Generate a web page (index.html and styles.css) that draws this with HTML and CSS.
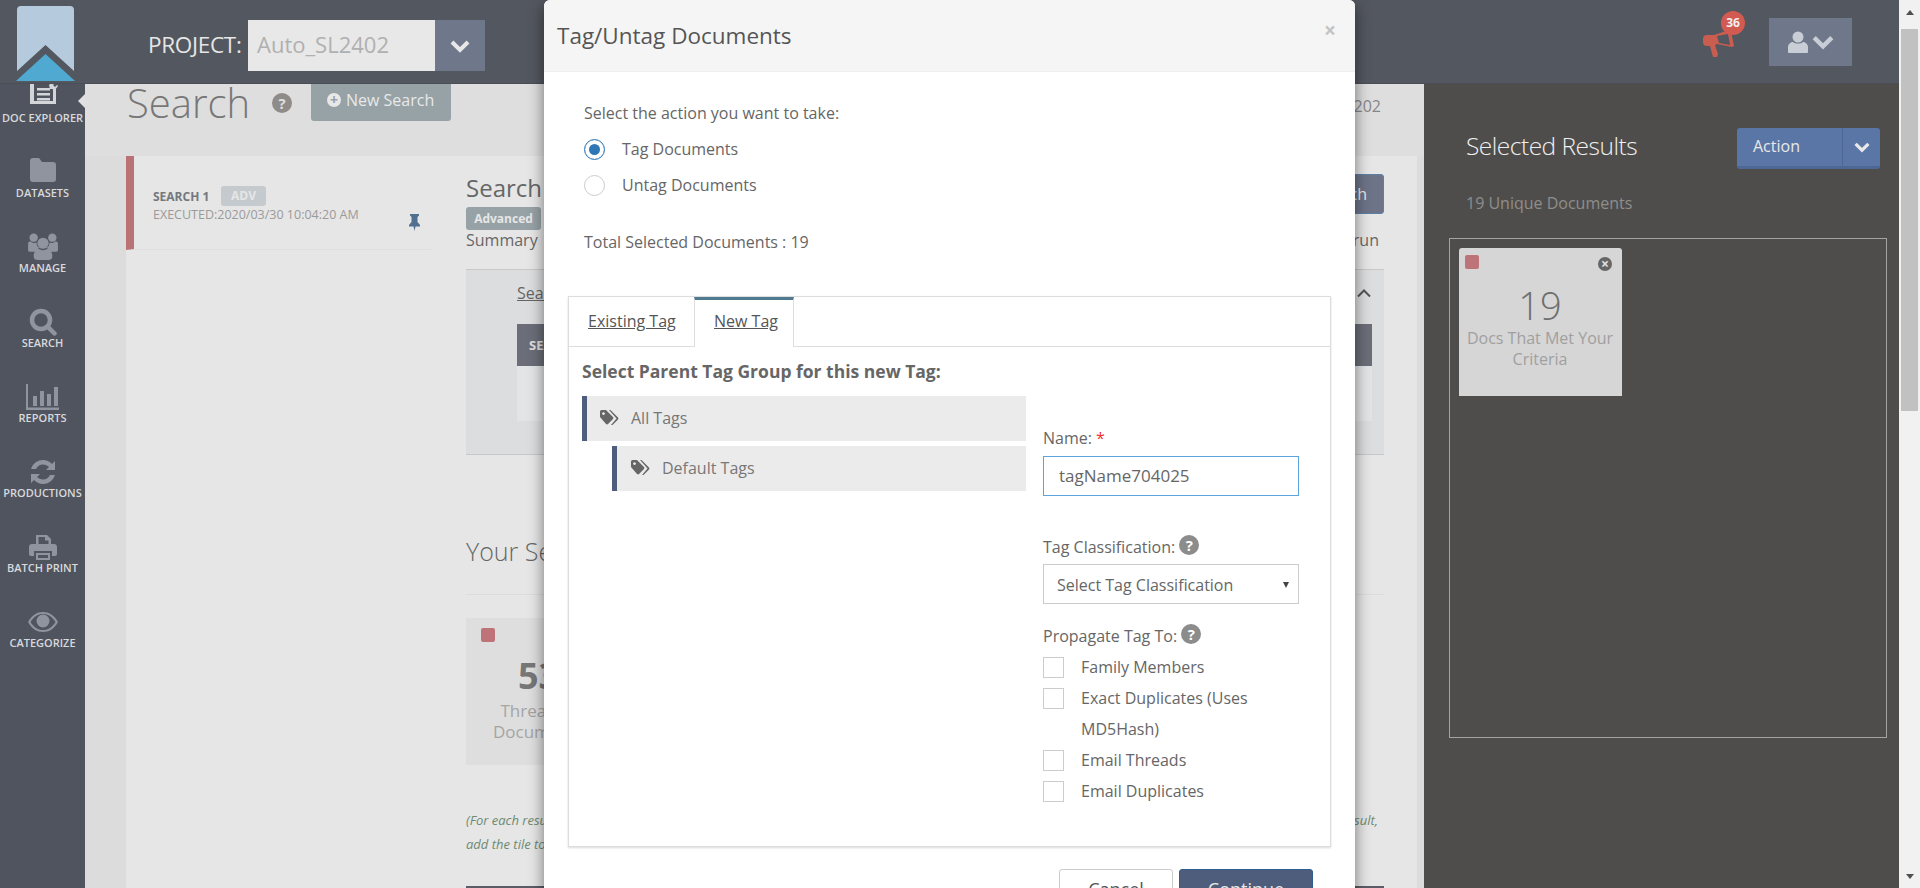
FILE: index.html
```html
<!DOCTYPE html>
<html lang="en">
<head>
  <meta charset="UTF-8">
  <title>Search</title>
  <link rel="stylesheet" href="styles.css">
</head>
<body>
  <div class="page">
    <div class="app">
      <!-- Top bar -->
      <header class="topbar">
        <svg class="logo" width="64" height="78" viewBox="0 0 64 78">
          <path d="M6 6a4 4 0 0 1 4-4h49a4 4 0 0 1 4 4v61L34.500 41 6 67z" fill="#b5cbdd"/>
          <path d="M34.500 50 64 77H5z" fill="#4fa9d1"/>
        </svg>
        <span class="project-label">PROJECT:</span>
        <div class="project-select">
          <span class="project-name">Auto_SL2402</span>
          <span class="project-btn">
            <svg width="20" height="14" viewBox="0 0 20 14"><path d="M2 3l8 8 8-8" class="chev-line"/></svg>
          </span>
        </div>
        <div class="top-right">
          <div class="notify">
            <svg width="32" height="27" viewBox="0 0 32 27">
              <path d="M0 9a4 4 0 0 1 4-4h7L26 0l2 1 3 15-2 1-15-3-2 1 3 9-1 3h-4l-3-11H4a4 4 0 0 1-4-4zM14 6l2 7 11 2-2-11z" fill="#c95d50" fill-rule="evenodd"/>
            </svg>
            <span class="notify-badge">36</span>
          </div>
          <div class="user-btn">
            <svg width="20" height="22" viewBox="0 0 20 22">
              <circle cx="10" cy="6" r="5.500" fill="#c9ced6"/>
              <path d="M1 22a1 1 0 0 1-1-1v-5c0-3 3-5 5-5 2 2 8 2 10 0 2 0 5 2 5 5v5a1 1 0 0 1-1 1z" fill="#c9ced6"/>
            </svg>
            <svg width="22" height="16" viewBox="0 0 20 14"><path d="M2 3l8 8 8-8" class="chev-line user-chev"/></svg>
          </div>
        </div>
      </header>

      <div class="body-row">
        <!-- Left nav -->
        <nav class="sidenav">
          <div class="nav-list">
            <a class="nav-item">
              <svg class="nav-icon" width="30" height="28" viewBox="0 0 30 28">
                <path d="M2 -3h20v4h-16v17h19V6h3v15H2z" fill="#d4d5d8"/>
                <path d="M9 5h13v2.500H9zM9 10h13v2.500H9zM9 15h13v2.500H9z" fill="#d4d5d8"/>
                <path d="M21 2l3-3 2 2-1 1 2 2 2-2 1 1-3 4-3-1-2 0z" fill="#d4d5d8"/>
              </svg>
              <span class="nav-label">DOC EXPLORER</span>
            </a>
            <a class="nav-item">
              <svg class="nav-icon" width="28" height="28" viewBox="0 3 28 28">
                <path d="M1 6a3 3 0 0 1 3-3h6l3 4h11a3 3 0 0 1 3 3v14a3 3 0 0 1-3 3H4a3 3 0 0 1-3-3z" fill="#90949f"/>
              </svg>
              <span class="nav-label">DATASETS</span>
            </a>
            <a class="nav-item">
              <svg class="nav-icon" width="32" height="30" viewBox="0 0 32 30">
                <circle cx="6" cy="5" r="4.500" fill="#90949f"/>
                <circle cx="26" cy="5" r="4.500" fill="#90949f"/>
                <circle cx="16" cy="11" r="6" fill="#90949f"/>
                <path d="M0 11c0-2 2-2 3-2 2 2 5 2 6 1 0 3 1 5 3 6-2 1-3 2-4 4H2c-2 0-2-1-2-2zM32 11c0-2-2-2-3-2-2 2-5 2-6 1 0 3-1 5-3 6 2 1 3 2 4 4h6c2 0 2-1 2-2z" fill="#90949f"/>
                <path d="M6 25c0-5 3-8 5-8 3 2 7 2 10 0 2 0 5 3 5 8 0 3-2 4-4 4H10c-2 0-4-1-4-4z" fill="#90949f"/>
              </svg>
              <span class="nav-label">MANAGE</span>
            </a>
            <a class="nav-item">
              <svg class="nav-icon" width="28" height="28" viewBox="0 0 28 28">
                <circle cx="12" cy="12" r="9" fill="none" stroke="#90949f" stroke-width="4.500"/>
                <path d="M18.500 18.500l7 7" stroke="#90949f" stroke-width="4.500" stroke-linecap="round"/>
              </svg>
              <span class="nav-label">SEARCH</span>
            </a>
            <a class="nav-item">
              <svg class="nav-icon" width="33" height="26" viewBox="0 0 33 26">
                <path d="M0 0h2v23.500h31V26H0z" fill="#90949f"/>
                <path d="M7 12h4v10H7zM14 7h4v15h-4zM21 10h4v12h-4zM28 3h4v19h-4z" fill="#90949f"/>
              </svg>
              <span class="nav-label">REPORTS</span>
            </a>
            <a class="nav-item">
              <svg class="nav-icon" width="26" height="26" viewBox="0 0 26 26">
                <path d="M1 10C3 4 8 1 13 1c4 0 7 2 9 4l3-3v9h-9l3-3c-1.500-1.500-4-2.500-6-2.500-3 0-6 2-7 4.500z" fill="#90949f"/>
                <path d="M25 16c-2 6-7 9-12 9-4 0-7-2-9-4l-3 3v-9h9l-3 3c1.500 1.500 4 2.500 6 2.500 3 0 6-2 7-4.500z" fill="#90949f"/>
              </svg>
              <span class="nav-label">PRODUCTIONS</span>
            </a>
            <a class="nav-item">
              <svg class="nav-icon" width="28" height="26" viewBox="0 0 28 26">
                <path d="M7 1h11l4 4v6h-2.500V6.500H16V3H9.500v8H7z" fill="#90949f"/>
                <path d="M3 10h22a3 3 0 0 1 3 3v7a2 2 0 0 1-2 2h-3v-5H5v5H2a2 2 0 0 1-2-2v-7a3 3 0 0 1 3-3z" fill="#90949f"/>
                <path d="M7 19h14v7H7z" fill="#90949f"/>
                <path d="M9 21h10v3H9z" fill="#50545e"/>
              </svg>
              <span class="nav-label">BATCH PRINT</span>
            </a>
            <a class="nav-item">
              <svg class="nav-icon" width="30" height="20" viewBox="0 0 30 20">
                <path d="M0 10C4 3 9 0 15 0s11 3 15 10c-4 7-9 10-15 10S4 17 0 10zm2.500 0C6 15.500 10 18 15 18s9-2.500 12.500-8C24 4.500 20 2 15 2S6 4.500 2.500 10z" fill="#90949f" fill-rule="evenodd"/>
                <circle cx="15" cy="9" r="6.500" fill="#90949f"/>
              </svg>
              <span class="nav-label">CATEGORIZE</span>
            </a>
          </div>
          <span class="nav-notch"></span>
        </nav>

        <!-- Main search page, mostly behind the dialog -->
        <main class="content">
          <div class="title-row">
            <h1 class="page-title">Search</h1>
            <span class="help-dot help-lg">?</span>
            <a class="new-search">
              <span class="plus-dot">+</span>
              New Search
            </a>
            <span class="title-meta">202</span>
          </div>

          <div class="panel">
            <div class="search-list">
              <div class="search-item">
                <div class="search-line">
                  <span class="search-name">SEARCH 1</span>
                  <span class="adv-badge">ADV</span>
                </div>
                <div class="search-date-row">
                  <span class="search-date">EXECUTED:2020/03/30 10:04:20 AM</span>
                  <svg class="pin" width="13" height="17" viewBox="0 0 13 17">
                    <path d="M2 0h9v1.500L9.500 3v5l2.500 3v1.500H7.500L6.500 17l-1-4.500H1V11l2.500-3V3L2 1.500z" fill="#4f708f"/>
                  </svg>
                </div>
              </div>
            </div>

            <div class="search-detail">
              <div class="detail-head">
                <h2 class="detail-title">Search</h2>
                <a class="detail-btn">Save Search</a>
              </div>
              <span class="advanced-badge">Advanced</span>
              <div class="summary-row">
                <span>Summary</span>
                <span>run</span>
              </div>
              <div class="summary-box">
                <div class="summary-top">
                  <a class="summary-link">Search</a>
                  <svg width="16" height="10" viewBox="0 0 16 10"><path d="M2 8.500l6-6 6 6" fill="none" stroke="#555" stroke-width="2"/></svg>
                </div>
                <div class="summary-table-head">SEARCH</div>
                <div class="summary-table-row"></div>
              </div>

              <h2 class="results-title">Your Search Results</h2>
              <div class="tile tile-main">
                <span class="tile-square"></span>
                <div class="tile-num">53</div>
                <div class="tile-text">Threaded<br>Documents</div>
              </div>
              <p class="hint hint-first">
                <span>(For each result, check the count on its tile</span>
                <span>result,</span>
              </p>
              <p class="hint">add the tile to the selected results</p>
              <div class="detail-rule"></div>
            </div>
          </div>
        </main>

        <!-- Selected results -->
        <aside class="selected">
          <div class="selected-head">
            <h2 class="selected-title">Selected Results</h2>
            <div class="action-btn">
              <span class="action-text">Action</span>
              <span class="action-caret">
                <svg width="16" height="12" viewBox="0 0 20 14"><path d="M2 3l8 8 8-8" class="chev-line"/></svg>
              </span>
            </div>
          </div>
          <div class="selected-count">19 Unique Documents</div>
          <div class="selected-box">
            <div class="tile-card">
              <div class="card-top">
                <span class="tile-square"></span>
                <span class="card-close">×</span>
              </div>
              <div class="card-num">19</div>
              <div class="card-text">Docs That Met Your Criteria</div>
            </div>
          </div>
        </aside>
      </div>
    </div>

    <!-- Fake page scrollbar -->
    <div class="scrollbar">
      <span class="arrow-up"></span>
      <span class="scroll-thumb"></span>
      <span class="arrow-down"></span>
    </div>

    <!-- Dialog -->
    <div class="modal">
      <div class="modal-header">
        <h3 class="modal-title">Tag/Untag Documents</h3>
        <span class="modal-close">×</span>
      </div>
      <div class="modal-body">
        <div class="action-block">
          <p class="action-prompt">Select the action you want to take:</p>
          <div class="radio-row"><span class="radio radio-on"></span>Tag Documents</div>
          <div class="radio-row"><span class="radio"></span>Untag Documents</div>
          <p class="total-line">Total Selected Documents : 19</p>
        </div>

        <div class="tab-box">
          <div class="tabs">
            <a class="tab">Existing Tag</a>
            <a class="tab tab-active">New Tag</a>
          </div>
          <div class="tab-panel">
            <p class="parent-title">Select Parent Tag Group for this new Tag:</p>
            <div class="tab-columns">
              <div class="tree">
                <div class="tree-row">
                  <svg class="tag-icon" width="19" height="15" viewBox="0 0 19 15">
                    <path d="M0 1.500A1.500 1.500 0 0 1 1.500 0H6l7 7a1.500 1.500 0 0 1 0 2l-5 5a1.500 1.500 0 0 1-2 0L0 7zM3.500 2.200a1.400 1.400 0 1 0 .01 0z" fill="#666" fill-rule="evenodd"/>
                    <path d="M9 0h1.500l7.500 7.500a1.500 1.500 0 0 1 0 2L12.500 15H11l5.500-6.500z" fill="#666"/>
                  </svg>
                  <span>All Tags</span>
                </div>
                <div class="tree-row tree-child">
                  <svg class="tag-icon" width="19" height="15" viewBox="0 0 19 15">
                    <path d="M0 1.500A1.500 1.500 0 0 1 1.500 0H6l7 7a1.500 1.500 0 0 1 0 2l-5 5a1.500 1.500 0 0 1-2 0L0 7zM3.500 2.200a1.400 1.400 0 1 0 .01 0z" fill="#666" fill-rule="evenodd"/>
                    <path d="M9 0h1.500l7.500 7.500a1.500 1.500 0 0 1 0 2L12.500 15H11l5.500-6.500z" fill="#666"/>
                  </svg>
                  <span>Default Tags</span>
                </div>
              </div>

              <div class="tag-form">
                <label class="form-label">Name: <span class="req">*</span></label>
                <div class="text-input">tagName704025</div>
                <label class="form-label label-class">Tag Classification: <span class="help-dot">?</span></label>
                <div class="select-input">
                  <span>Select Tag Classification</span>
                  <span class="select-arrow"></span>
                </div>
                <label class="form-label label-prop">Propagate Tag To: <span class="help-dot">?</span></label>
                <div class="checks">
                  <div class="check-row"><span class="checkbox"></span><span>Family Members</span></div>
                  <div class="check-row"><span class="checkbox"></span><span>Exact Duplicates (Uses MD5Hash)</span></div>
                  <div class="check-row"><span class="checkbox"></span><span>Email Threads</span></div>
                  <div class="check-row"><span class="checkbox"></span><span>Email Duplicates</span></div>
                </div>
              </div>
            </div>
          </div>
        </div>
      </div>
      <div class="modal-footer">
        <a class="btn btn-cancel">Cancel</a>
        <a class="btn btn-continue">Continue</a>
      </div>
    </div>
  </div>
</body>
</html>
```

FILE: styles.css
```css
* {
  box-sizing: border-box;
}
html, body {
  margin: 0;
  height: 100%;
  overflow: hidden;
}
body {
  font-family: "Open Sans", sans-serif;
  font-size: 16px;
  color: #666;
}
h1, h2, h3, p {
  margin: 0;
  font-weight: normal;
}
.page {
  position: relative;
  display: flex;
  width: 1920px;
  height: 888px;
  overflow: hidden;
}
.app {
  flex: 1;
  display: flex;
  flex-direction: column;
  min-width: 0;
}

/* top bar */
.topbar {
  position: relative;
  z-index: 2;
  flex: 0 0 84px;
  display: flex;
  align-items: flex-start;
  background-color: #53575f;
  border-bottom: 1px solid #4b4e56;
}
.logo {
  flex: none;
  margin: 4px 0 0 11px;
}
.project-label {
  margin: 28px 0 0 73px;
  width: 100px;
  font-size: 22.500px;
  line-height: 34px;
  letter-spacing: -0.3px;
  color: #e6e6e6;
}
.project-select {
  display: flex;
  margin-top: 20px;
  height: 51px;
}
.project-name {
  width: 187px;
  padding-left: 9px;
  font-size: 22px;
  line-height: 48px;
  color: #b0b0b0;
  background-color: #e8e8e8;
}
.project-btn {
  display: flex;
  align-items: center;
  justify-content: center;
  width: 50px;
  background-color: #6f778a;
}
.chev-line {
  fill: none;
  stroke: #e8e8e8;
  stroke-width: 4;
}
.user-chev {
  stroke: #c9ced6;
}
.top-right {
  margin-left: auto;
  display: flex;
  margin-right: 47px;
}
.notify {
  position: relative;
  margin: 30px 34px 0 0;
  width: 32px;
  height: 27px;
}
.notify-badge {
  position: absolute;
  left: 18px;
  top: -19px;
  width: 24px;
  height: 24px;
  border-radius: 50%;
  background-color: #d35a50;
  color: #f0f0f0;
  font-size: 12px;
  font-weight: 700;
  line-height: 24px;
  text-align: center;
}
.user-btn {
  display: flex;
  align-items: center;
  justify-content: center;
  gap: 4px;
  margin-top: 18px;
  width: 83px;
  height: 48px;
  background-color: #6f778a;
}

.body-row {
  flex: 1;
  display: flex;
  min-height: 0;
}

/* left nav */
.sidenav {
  position: relative;
  flex: 0 0 85px;
  background-color: #50545e;
}
.nav-list {
  margin-top: -14px;
}
.nav-item {
  display: block;
  height: 75px;
  padding-top: 13px;
  text-align: center;
}
.nav-icon {
  display: block;
  height: 28px;
  margin: 0 auto;
}
.nav-label {
  display: block;
  font-size: 11px;
  font-weight: 600;
  line-height: 14px;
  white-space: nowrap;
  color: #d8d9dc;
}
.nav-notch {
  position: absolute;
  right: 0;
  top: 10px;
  border-top: 7px solid transparent;
  border-bottom: 7px solid transparent;
  border-right: 7px solid #e0e0e0;
}

/* main content */
.content {
  flex: 0 0 1339px;
  min-width: 0;
  background-color: #dcdcdc;
}
.title-row {
  display: flex;
  align-items: flex-start;
  height: 72px;
  padding-left: 42px;
  background-color: #dedede;
}
.page-title {
  flex: 0 0 145px;
  font-size: 40px;
  font-weight: 300;
  line-height: 38px;
  color: #777;
}
.help-dot {
  display: inline-block;
  width: 20px;
  height: 20px;
  border-radius: 50%;
  background-color: #8c8c8c;
  color: #fff;
  font-size: 15px;
  font-weight: 700;
  line-height: 20px;
  text-align: center;
  vertical-align: 2px;
}
.help-lg {
  margin-top: 9px;
  background-color: #8e8b88;
  color: #e0e0e0;
}
.new-search {
  display: flex;
  align-items: center;
  gap: 5px;
  margin-left: 19px;
  width: 140px;
  height: 37px;
  padding: 0 0 6px 16px;
  background-color: #97a2a6;
  border-radius: 0 0 3px 3px;
  color: #e8e8e8;
  font-size: 16px;
}
.plus-dot {
  width: 14px;
  height: 14px;
  border-radius: 50%;
  background-color: #e8e8e8;
  color: #97a2a6;
  font-size: 14px;
  font-weight: 700;
  line-height: 14px;
  text-align: center;
}
.title-meta {
  margin: 11px 43px 0 auto;
  font-size: 16px;
  line-height: 22px;
  color: #888;
}
.panel {
  display: flex;
  margin-left: 41px;
  width: 1291px;
  height: 732px;
  background-color: #e6e6e6;
}
.search-list {
  flex: 0 0 305px;
}
.search-item {
  height: 94px;
  padding: 30px 0 0 19px;
  border-left: 8px solid #b97376;
  border-bottom: 1px solid #dedede;
}
.search-line {
  display: flex;
  align-items: center;
  height: 20px;
}
.search-name {
  width: 68px;
  font-size: 12px;
  font-weight: 700;
  color: #74787d;
}
.adv-badge {
  width: 45px;
  height: 20px;
  border-radius: 3px;
  background-color: #c4cace;
  color: #e6e6e6;
  font-size: 12px;
  font-weight: 700;
  line-height: 20px;
  text-align: center;
}
.search-date-row {
  display: flex;
  align-items: flex-start;
}
.search-date {
  width: 255px;
  font-size: 12.500px;
  line-height: 17px;
  white-space: nowrap;
  color: #9a9a9a;
}
.pin {
  margin-top: 8px;
}
.search-detail {
  width: 918px;
  margin-left: 35px;
}
.detail-head {
  display: flex;
  justify-content: space-between;
  align-items: flex-start;
  height: 51px;
  padding-top: 18px;
}
.detail-title {
  font-size: 24px;
  line-height: 28px;
  color: #666;
}
.detail-btn {
  width: 120px;
  height: 40px;
  padding-right: 16px;
  border: 1px solid #5c7fa5;
  border-radius: 3px;
  background-color: #6d7488;
  color: #e8e8e8;
  font-size: 16px;
  line-height: 38px;
  text-align: right;
}
.advanced-badge {
  display: block;
  width: 75px;
  height: 23px;
  border-radius: 3px;
  background-color: #97a2a6;
  color: #e6e6e6;
  font-size: 12px;
  font-weight: 700;
  line-height: 23px;
  text-align: center;
}
.summary-row {
  display: flex;
  justify-content: space-between;
  height: 39px;
  padding-right: 5px;
  font-size: 16px;
  line-height: 20px;
  color: #666;
}
.summary-box {
  height: 186px;
  padding: 0 12px 0 51px;
  background-color: #dcdddf;
  border-top: 1px solid #c8c8c8;
  border-bottom: 1px solid #c8c8c8;
}
.summary-top {
  display: flex;
  justify-content: space-between;
  align-items: center;
  height: 40px;
  padding: 6px 0 0;
}
.summary-link {
  font-size: 16px;
  color: #666;
  text-decoration: underline;
}
.summary-table-head {
  margin-top: 14px;
  height: 42px;
  padding-left: 12px;
  background-color: #6b6e78;
  color: #e0e0e0;
  font-size: 13px;
  font-weight: 700;
  line-height: 42px;
}
.summary-table-row {
  height: 55px;
  background-color: #e3e4e5;
}
.results-title {
  margin-top: 80px;
  height: 60px;
  border-bottom: 1px solid #dcdcdc;
  font-size: 25px;
  font-weight: 300;
  line-height: 32px;
  color: #666;
}
.tile-main {
  margin-top: 23px;
  width: 145px;
  height: 147px;
  padding: 10px 0 0 15px;
  background-color: #dedede;
}
.tile-square {
  display: block;
  width: 14px;
  height: 14px;
  border-radius: 2px;
  background-color: #bd7377;
}
.tile-num {
  margin: 10px 0 0 -15px;
  font-size: 36px;
  font-weight: 700;
  line-height: 48px;
  text-align: center;
  color: #777;
}
.tile-text {
  margin-left: -15px;
  font-size: 17px;
  line-height: 21px;
  text-align: center;
  color: #a5a5a5;
}
.hint {
  font-size: 13px;
  font-style: italic;
  line-height: 24px;
  color: #6d8a72;
}
.hint-first {
  display: flex;
  justify-content: space-between;
  margin-top: 43px;
  padding-right: 6px;
}
.detail-rule {
  margin-top: 30px;
  height: 3px;
  background-color: #5a5d65;
}

/* selected results panel */
.selected {
  flex: 1;
  min-width: 0;
  padding: 44px 19px 0 25px;
  background-color: #4e4d4b;
}
.selected-head {
  display: flex;
  justify-content: space-between;
  height: 41px;
  padding-left: 17px;
}
.selected-title {
  font-size: 24.500px;
  font-weight: 300;
  line-height: 35px;
  letter-spacing: -0.5px;
  color: #f0f0f0;
}
.action-btn {
  display: flex;
  width: 143px;
  height: 41px;
  background-color: #5a76a6;
  border-bottom: 3px solid #4e6896;
  border-radius: 3px;
  color: #e8e8e8;
}
.action-text {
  width: 105px;
  padding-left: 16px;
  font-size: 16px;
  line-height: 36px;
}
.action-caret {
  flex: 1;
  display: flex;
  align-items: center;
  justify-content: center;
  border-left: 1px solid #4e6896;
}
.selected-count {
  margin-top: 23px;
  padding-left: 17px;
  font-size: 16px;
  line-height: 22px;
  color: #8f8e8b;
}
.selected-box {
  margin-top: 24px;
  width: 438px;
  height: 500px;
  padding: 9px;
  border: 1px solid #a3a3a1;
}
.tile-card {
  width: 163px;
  height: 148px;
  padding: 7px 7px 0 6px;
  background-color: #d6d6d6;
  border-radius: 3px 3px 0 0;
  text-align: center;
}
.card-top {
  display: flex;
  justify-content: space-between;
  align-items: flex-start;
  height: 22px;
}
.card-close {
  width: 14px;
  height: 14px;
  margin: 2px 3px 0 0;
  border-radius: 50%;
  background-color: #666;
  color: #e0e0e0;
  font-size: 14px;
  font-weight: 700;
  line-height: 13px;
}
.card-num {
  margin-top: 5px;
  font-size: 38px;
  font-weight: 300;
  line-height: 46px;
  color: #6e6e6e;
}
.card-text {
  margin: 0 -2px;
  font-size: 16px;
  line-height: 21px;
  color: #a0a0a0;
}

/* scrollbar */
.scrollbar {
  flex: 0 0 21px;
  position: relative;
  display: flex;
  flex-direction: column;
  align-items: center;
  background-color: #f1f1f1;
}
.arrow-up {
  margin-top: 10px;
  border-left: 4.500px solid transparent;
  border-right: 4.500px solid transparent;
  border-bottom: 5px solid #505050;
}
.scroll-thumb {
  margin-top: 14px;
  width: 17px;
  height: 382px;
  background-color: #c1c1c1;
}
.arrow-down {
  margin-top: auto;
  margin-bottom: 9px;
  border-left: 4.500px solid transparent;
  border-right: 4.500px solid transparent;
  border-top: 5px solid #505050;
}

/* dialog */
.modal {
  position: absolute;
  left: 544px;
  top: 0;
  z-index: 5;
  width: 811px;
  height: 930px;
  background-color: #fff;
  border-radius: 6px;
  box-shadow: 0 5px 15px rgba(0, 0, 0, 0.5);
}
.modal-header {
  display: flex;
  justify-content: space-between;
  align-items: flex-start;
  height: 72px;
  padding: 21px 19px 0 13px;
  background-color: #f5f5f5;
  border-bottom: 1px solid #eee;
  border-radius: 6px 6px 0 0;
}
.modal-title {
  font-size: 22.500px;
  line-height: 30px;
  color: #555;
}
.modal-close {
  margin-top: -3px;
  font-size: 21px;
  font-weight: 700;
  line-height: 24px;
  color: #c4c4c4;
}
.modal-body {
  padding: 0 24px;
}
.action-block {
  padding: 30px 0 43px 16px;
}
.action-prompt, .total-line {
  line-height: 22px;
}
.total-line {
  margin-top: 28px;
}
.radio-row {
  display: flex;
  align-items: center;
  height: 36px;
  color: #666;
}
.action-prompt + .radio-row {
  margin-top: 7px;
}
.radio {
  flex: none;
  width: 21px;
  height: 21px;
  margin-right: 17px;
  border: 1px solid #ccc;
  border-radius: 50%;
  background-color: #fff;
}
.radio-on {
  border-color: #2f76b5;
  box-shadow: inset 0 0 0 4px #fff, inset 0 0 0 11px #2f76b5;
}
.tab-box {
  height: 551px;
  border: 1px solid #ddd;
  box-shadow: 0 1px 2px rgba(0, 0, 0, 0.15);
}
.tabs {
  display: flex;
  height: 50px;
  border-bottom: 1px solid #ddd;
}
.tab {
  height: 50px;
  padding: 0 19px;
  font-size: 16px;
  line-height: 48px;
  white-space: nowrap;
  color: #555;
  text-decoration: underline;
}
.tab:first-child {
  width: 125px;
}
.tab-active {
  width: 100px;
  background-color: #fff;
  border: 1px solid #ddd;
  border-top: 3px solid #4f7a8f;
  border-bottom: none;
  line-height: 42px;
}
.tab-panel {
  padding: 13px 0 0 13px;
}
.parent-title {
  font-size: 17.500px;
  font-weight: 700;
  line-height: 22px;
  color: #666;
}
.tab-columns {
  display: flex;
  gap: 17px;
  margin-top: 14px;
}
.tree {
  flex: 0 0 444px;
}
.tree-row {
  display: flex;
  align-items: center;
  height: 45px;
  margin-bottom: 5px;
  padding: 0 0 2px 13px;
  background-color: #ebebeb;
  border-left: 5px solid #4f5d7c;
  color: #777;
}
.tree-child {
  margin-left: 30px;
  padding-left: 14px;
}
.tag-icon {
  flex: none;
  margin-right: 12px;
}
.tag-form {
  flex: 0 0 256px;
  padding-top: 31px;
}
.form-label {
  display: block;
  height: 22px;
  line-height: 22px;
  color: #666;
}
.req {
  color: #e33;
}
.text-input, .select-input {
  margin-top: 7px;
  height: 40px;
  background-color: #fff;
  line-height: 38px;
  color: #666;
}
.text-input {
  padding-left: 15px;
  border: 1px solid #5aa5e0;
  font-size: 17px;
}
.select-input {
  display: flex;
  justify-content: space-between;
  align-items: center;
  padding: 2px 9px 0 13px;
  border: 1px solid #ccc;
}
.select-arrow {
  border-left: 3.500px solid transparent;
  border-right: 3.500px solid transparent;
  border-top: 6px solid #444;
}
.label-class {
  margin-top: 39px;
}
.label-prop {
  margin-top: 20px;
}
.checks {
  margin-top: 6px;
}
.check-row {
  display: flex;
  line-height: 31px;
  color: #666;
}
.checkbox {
  flex: none;
  width: 21px;
  height: 21px;
  margin: 5px 17px 0 0;
  border: 1px solid #ccc;
}
.modal-footer {
  display: flex;
  justify-content: flex-end;
  gap: 6px;
  padding: 22px 42px 0 0;
}
.btn {
  height: 40px;
  font-size: 18px;
  line-height: 38px;
  text-align: center;
  border-radius: 3px;
}
.btn-cancel {
  width: 114px;
  border: 1px solid #ccc;
  color: #555;
}
.btn-continue {
  width: 134px;
  border: 1px solid #2e5f8e;
  background-color: #4f5d7c;
  color: #e8e8e8;
}
```
